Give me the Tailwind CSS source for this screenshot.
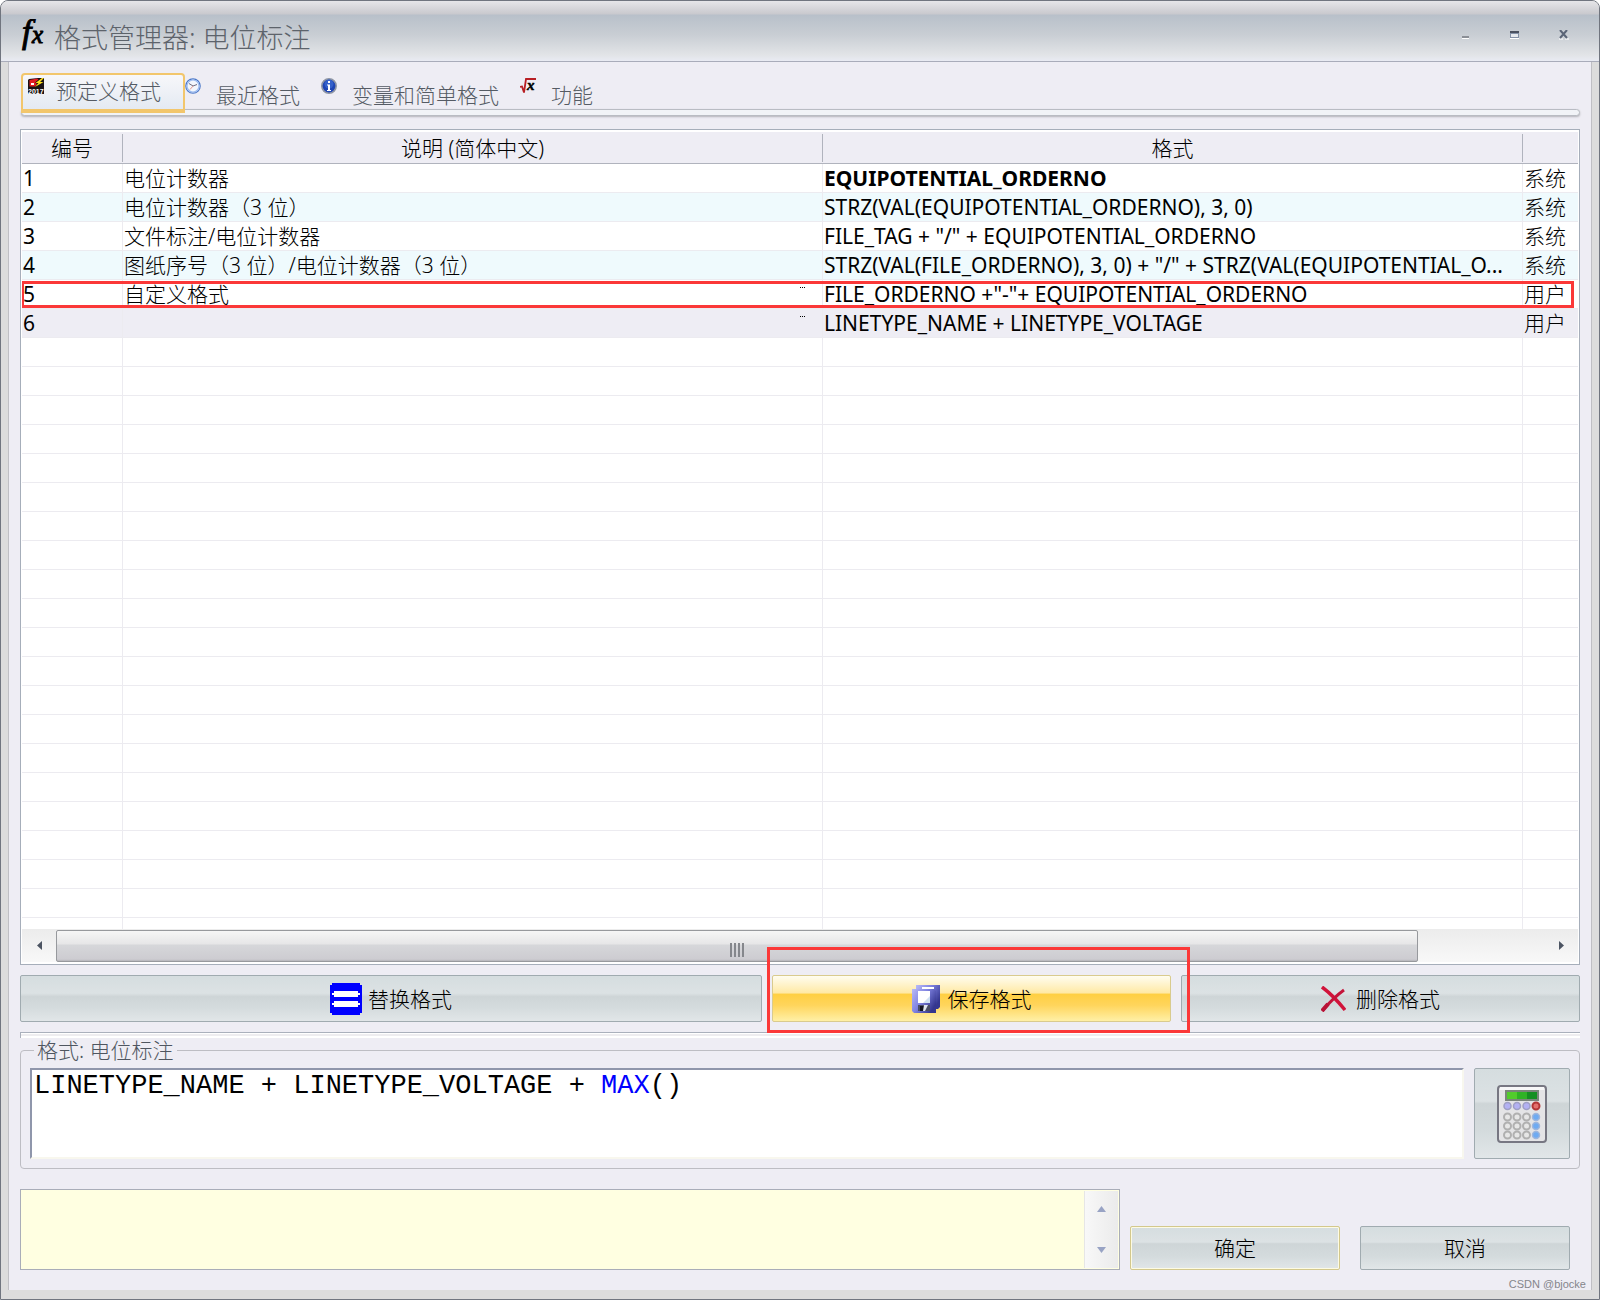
<!DOCTYPE html>
<html lang="zh-CN">
<head>
    <meta charset="UTF-8">
    <meta name="viewport" content="width=device-width, initial-scale=1.0">
    <title>格式管理器: 电位标注</title>
    <script src="https://cdn.jsdelivr.net/npm/@tailwindcss/browser@4"></script>
</head>
<body class="bg-white">
<div class="h-screen min-h-[700px] flex flex-col rounded-t-lg border border-[#70757f] bg-[#dcdcdc] overflow-hidden text-[21px] leading-7 text-black font-['Noto_Sans','Noto_Sans_CJK_SC',sans-serif]">

    <!-- Title bar -->
    <header class="h-[61px] shrink-0 flex items-center border-b border-[#a9acba] pl-4 pr-[30px] bg-[linear-gradient(#e6e6e9_0px,#c9c9ce_13px,#b8c0ca_14px,#c9ced4_34px,#e2e4e7_54px,#e9ebf3_60px)]">
        <svg class="w-[37px] h-8 mt-2" viewBox="0 0 37 32" aria-hidden="true" font-family="Liberation Serif" font-style="italic" stroke="#000">
            <text x="5" y="24" font-size="34" stroke-width="1">f</text>
            <text x="15" y="24" font-size="25" stroke-width="1">x</text>
        </svg>
        <h1 class="flex-1 pt-[14px] text-[27px] leading-9 font-light text-[#5d636b]">格式管理器: 电位标注</h1>
        <div class="flex gap-[39px] pt-2">
            <button type="button" aria-label="最小化">
                <svg class="w-[10px] h-[10px]" viewBox="0 0 10 10"><path d="M1 6h7v2H1z" fill="#8b8f96"/><path d="M1 8h7v1H1z" fill="#fff"/></svg>
            </button>
            <button type="button" aria-label="最大化">
                <svg class="w-[10px] h-[10px]" viewBox="0 0 10 10"><path d="M0 1h9v7H0z" fill="#8592a8"/><path d="M0 1h9v2H0z" fill="#4b5160"/><path d="M1 4h7v3H1z" fill="#e6e9ee"/><path d="M0 8h9v1H0z" fill="#fff"/></svg>
            </button>
            <button type="button" aria-label="关闭">
                <svg class="w-[10px] h-[10px]" viewBox="0 0 10 10"><path d="M0 9h4M6 9h4" stroke="#fff"/><path d="M1 0l7 8M8 0L1 8" stroke="#5b6577" stroke-width="2"/></svg>
            </button>
        </div>
    </header>

    <main class="flex-1 min-h-0 mx-[7px] mb-[9px] flex flex-col border-x border-[#bfbfc4] bg-[#eeedf4] px-[11px] pt-[11px]">

        <!-- Tabs -->
        <div class="shrink-0 flex items-start h-10 pl-px text-[#555b64] leading-7 font-light" role="tablist">
            <button type="button" role="tab" aria-selected="true" class="relative z-10 h-10 flex items-start gap-3 pl-[5px] pr-[22px] rounded-t border-2 border-b-4 border-[#f2c66c] bg-linear-to-b from-[#f7f7fa] to-[#e4eaf2]">
                <svg class="w-4 h-4 mt-[3px]" viewBox="0 0 16 16">
                    <path d="M1 1l9-1h6v16H0V2z" fill="#1a1214"/>
                    <path d="M1.500 2L9 .5l1.500 1L7 4.500l2 1.500-2 2.500H1.500z" fill="#e21b22"/>
                    <path d="M3 5h3v2H3z" fill="#fff"/>
                    <path d="M14 0L7.500 5h3L7 9l8.500-5H12l4-4z" fill="#ffe01a"/>
                    <text x="0" y="15.500" font-family="Liberation Sans" font-weight="bold" font-size="7" fill="#fff">2017</text>
                </svg>
                <span class="mt-[2px]">预定义格式</span>
            </button>
            <button type="button" role="tab" aria-selected="false" class="h-10 flex items-start gap-[15px] pr-[21px]">
                <svg class="w-4 h-4 mt-[5px]" viewBox="0 0 16 16">
                    <circle cx="8" cy="8" r="7.200" fill="#f3f7fd" stroke="#4c78c8" stroke-width="1.200"/>
                    <circle cx="8" cy="8" r="6" fill="none" stroke="#9dbcf0" stroke-width="1.200"/>
                    <path d="M4 5.500l4 2.500 4-1.500" fill="none" stroke="#6f6d80" stroke-width="1"/>
                    <path d="M8 8l-3 3.500" stroke="#e59a8e"/>
                </svg>
                <span class="mt-2">最近格式</span>
            </button>
            <button type="button" role="tab" aria-selected="false" class="h-10 flex items-start gap-[15px] pr-[21px]">
                <svg class="w-4 h-4 mt-[5px]" viewBox="0 0 16 16">
                    <circle cx="8" cy="8" r="7.200" fill="#1f45b4" stroke="#8f96a5" stroke-width="1.600"/>
                    <circle cx="8" cy="6" r="4.500" fill="#4a7be0" opacity=".5"/>
                    <path d="M7 3h2v2H7zM6 6.500h3V12h1v1H6v-1h1V7.500H6z" fill="#fff"/>
                </svg>
                <span class="mt-2">变量和简单格式</span>
            </button>
            <button type="button" role="tab" aria-selected="false" class="h-10 flex items-start gap-[15px]">
                <svg class="w-4 h-4 mt-[5px]" viewBox="0 0 16 16">
                    <path d="M0 9l2-.5 2 6L6 1h10" fill="none" stroke="#b81f24" stroke-width="1.800"/>
                    <text x="7" y="11.500" font-family="Liberation Serif" font-style="italic" font-weight="bold" font-size="15" stroke="#000" stroke-width=".5">x</text>
                </svg>
                <span class="mt-2">功能</span>
            </button>
        </div>
        <div class="shrink-0 h-[7px] -mt-1 ml-px rounded border border-[#b9bcc3] bg-[#f1f3f7] shadow-[0_1px_2px_#b4b4ba]"></div>

        <!-- Format list -->
        <section class="mt-[13px] flex-1 min-h-0 flex flex-col border border-[#a6aeba] bg-white pt-[2px] px-px pb-[2px]">
            <div class="flex-1 min-h-0 overflow-hidden">
                <table class="w-full table-fixed border-separate border-spacing-0">
                    <colgroup><col class="w-[101px]"><col><col><col class="w-[55px]"></colgroup>
                    <thead>
                        <tr class="h-8 bg-[#eeedf4]">
                            <th scope="col" class="p-0 font-light border-b border-[#b0b3bd]"><div class="h-7 border-r border-[#b0b3bd]">编号</div></th>
                            <th scope="col" class="p-0 font-light border-b border-[#b0b3bd]"><div class="h-7 border-r border-[#b0b3bd]">说明 (简体中文)</div></th>
                            <th scope="col" class="p-0 font-light border-b border-[#b0b3bd]"><div class="h-7 border-r border-[#b0b3bd]">格式</div></th>
                            <th scope="col" class="p-0 border-b border-[#b0b3bd]"></th>
                        </tr>
                    </thead>
                    <tbody id="formats" class="[&_td]:h-[29px] [&_td]:p-0 [&_td]:pl-px [&_td]:border-b [&_td]:border-r [&_td]:border-[#ecebf0] [&_td]:whitespace-nowrap [&_td:last-child]:border-r-0">
                        <tr><td>1</td><td class="font-light">电位计数器</td><td class="font-bold">EQUIPOTENTIAL_ORDERNO</td><td class="font-light">系统</td></tr>
                        <tr class="bg-[#effafd]"><td>2</td><td class="font-light">电位计数器（3 位）</td><td>STRZ(VAL(EQUIPOTENTIAL_ORDERNO), 3, 0)</td><td class="font-light">系统</td></tr>
                        <tr><td>3</td><td class="font-light">文件标注/电位计数器</td><td>FILE_TAG + "/" + EQUIPOTENTIAL_ORDERNO</td><td class="font-light">系统</td></tr>
                        <tr class="bg-[#effafd]"><td>4</td><td class="font-light">图纸序号（3 位）/电位计数器（3 位）</td><td>STRZ(VAL(FILE_ORDERNO), 3, 0) + "/" + STRZ(VAL(EQUIPOTENTIAL_O...</td><td class="font-light">系统</td></tr>
                        <tr class="relative">
                            <td>5<span class="absolute inset-y-px -left-px right-[4px] border-3 border-[#fb3838]"></span></td>
                            <td class="font-light"><div class="flex justify-between"><span>自定义格式</span><button type="button" aria-label="编辑说明" class="w-[22px] h-4"><svg class="w-[6px] h-[2px]" viewBox="0 0 6 2"><path d="M0 0h1v1H0zM2 0h1v1H2zM4 0h1v1H4z"/></svg></button></div></td>
                            <td>FILE_ORDERNO +"-"+ EQUIPOTENTIAL_ORDERNO</td><td class="font-light">用户</td>
                        </tr>
                        <tr class="bg-[#eeedf4]">
                            <td>6</td>
                            <td><div class="flex h-7 justify-end"><button type="button" aria-label="编辑说明" class="w-[22px] h-4"><svg class="w-[6px] h-[2px]" viewBox="0 0 6 2"><path d="M0 0h1v1H0zM2 0h1v1H2zM4 0h1v1H4z"/></svg></button></div></td>
                            <td>LINETYPE_NAME + LINETYPE_VOLTAGE</td><td class="font-light">用户</td>
                        </tr>
                    </tbody>
                </table>
            </div>
            <!-- Horizontal scrollbar -->
            <div class="shrink-0 h-[33px] flex bg-linear-to-b from-[#ececec] to-[#f8f8f8]">
                <button type="button" aria-label="向左滚动" class="w-[34px] flex items-center justify-center">
                    <svg class="w-[5px] h-[9px]" viewBox="0 0 5 9"><path d="M5 0v9L0 4.500z" fill="#4c5462"/></svg>
                </button>
                <div class="flex-1 flex pt-px">
                    <div class="flex-[1362] flex items-center justify-center gap-[2px] rounded-xs border border-[#97999d] bg-[linear-gradient(#f6f6f6,#e6e6e7_44%,#d6d7da_46%,#cdccd1_94%,#b4b4b9)]">
                        <i class="w-[2px] h-[14px] mt-2 bg-[#85878c]"></i><i class="w-[2px] h-[14px] mt-2 bg-[#85878c]"></i><i class="w-[2px] h-[14px] mt-2 bg-[#85878c]"></i><i class="w-[2px] h-[14px] mt-2 bg-[#85878c]"></i>
                    </div>
                    <div class="flex-[126]"></div>
                </div>
                <button type="button" aria-label="向右滚动" class="w-[34px] flex items-center justify-center">
                    <svg class="w-[5px] h-[9px]" viewBox="0 0 5 9"><path d="M0 0v9l5-4.500z" fill="#4c5462"/></svg>
                </button>
            </div>
        </section>

        <!-- Actions -->
        <div class="shrink-0 mt-[10px] h-[47px] flex gap-[10px] font-light">
            <button type="button" class="flex-[742] flex items-center justify-center gap-[6px] rounded-xs border border-[#a0abb0] bg-[linear-gradient(#d5dddf,#dce2e4_38%,#ced5d7_46%,#d4dbdd_70%,#e1e6e8)]">
                <svg class="w-8 h-8" viewBox="0 0 32 32"><path d="M2 0h28v2h2v28h-2v2H2v-2H0V2h2z" fill="#00f"/><path d="M4 8h24v2h2v2h-2v2H4v-2H2v-2h2zM4 18h24v2h2v2h-2v2H4v-2H2v-2h2z" fill="#fff"/></svg>
                替换格式
            </button>
            <div class="relative flex-[400] flex">
                <button type="button" class="flex-1 flex items-center justify-center gap-2 rounded-xs border border-[#d9cb8e] bg-[linear-gradient(#fffdf0,#ffe9a4_38%,#ffcf42_40%,#ffd55c_65%,#fff0a6)]">
                    <svg class="w-7 h-7" viewBox="0 0 28 28">
                        <defs><linearGradient id="disk" x1="0" x2="1" y2=".6"><stop offset="0" stop-color="#b9baf7"/><stop offset=".5" stop-color="#7f82e0"/><stop offset="1" stop-color="#34368f"/></linearGradient></defs>
                        <path d="M4 0h24v22l-2 2H4z" fill="url(#disk)"/>
                        <path d="M10 2h12v2H10z" fill="#fff"/>
                        <path d="M0 4h22l2 2v22H2l-2-2z" fill="url(#disk)"/>
                        <path d="M6 6h12v12H6z" fill="#fff"/><path d="M18 11v7h-7z" fill="#cfe0f2"/>
                        <path d="M6 20h12v6H6z" fill="#4a4d66"/><path d="M8 21h4v5H8z" fill="#151522"/><path d="M12 20h4l-3 6h-2z" fill="#dfe5ee"/>
                    </svg>
                    保存格式
                </button>
                <span class="absolute z-10 -top-7 -bottom-[11px] -left-[5px] -right-[19px] border-3 border-[#fb3838] pointer-events-none"></span>
            </div>
            <button type="button" class="flex-[398] flex items-center justify-center gap-[10px] rounded-xs border border-[#a0abb0] bg-[linear-gradient(#d5dddf,#dce2e4_38%,#ced5d7_46%,#d4dbdd_70%,#e1e6e8)]">
                <svg class="w-[25px] h-[26px]" viewBox="0 0 25 26"><path d="M1 1c8 6 15 13 23 23" fill="none" stroke="#d1133a" stroke-width="3.500"/><path d="M23 4C16 9 8 17 2 24" fill="none" stroke="#c4143a" stroke-width="3"/><path d="M1 25l6-7" stroke="#b81236" stroke-width="4"/></svg>
                删除格式
            </button>
        </div>

        <div class="shrink-0 mt-[10px] h-[6px] border-t border-l border-[#aab0bc] bg-white"><div class="mt-px h-[2px] bg-[#eeedf0]"></div></div>

        <!-- Formula editor -->
        <fieldset class="shrink-0 min-w-0 rounded border border-[#bdbdc3] px-[9px] pt-[6px] pb-[9px]">
            <legend class="ml-[4px] px-[3px] leading-6 font-light text-[#4f5660]"><label for="formula">格式: 电位标注</label></legend>
            <div class="flex gap-[10px] h-[91px]">
                <div class="flex-1 grid border-2 border-t-[#8f96ab] border-l-[#8f96ab] border-r-[#f8f7ee] border-b-[#f8f7ee] bg-white font-['Liberation_Mono',monospace] text-[27px] leading-8">
                    <pre id="highlight" aria-hidden="true" class="[grid-area:1/1] overflow-hidden px-[2px] font-['Liberation_Mono',monospace]"></pre>
                    <textarea id="formula" spellcheck="false" class="[grid-area:1/1] resize-none px-[2px] bg-transparent text-transparent caret-black outline-none">LINETYPE_NAME + LINETYPE_VOLTAGE + MAX()</textarea>
                </div>
                <button type="button" aria-label="计算器" class="w-24 flex items-center justify-center rounded-xs border border-[#a0abb0] bg-[linear-gradient(#d5dddf,#dce2e4_36%,#ced5d7_39%,#d4dbdd_70%,#e1e6e8)]">
                    <svg class="w-[50px] h-[58px]" viewBox="0 0 50 58">
                        <rect x="1" y="1" width="48" height="56" rx="3" fill="#e4e4e6" stroke="#777782" stroke-width="2"/>
                        <path d="M3 2h44v3H3z" fill="#f7f7f8"/>
                        <path d="M8 5h34v11H8z" fill="#7a857a"/><path d="M10 7h30v7H10z" fill="#158f22"/><path d="M10 7h20v7H10z" fill="#2fb325"/><path d="M10 7h10v7H10z" fill="#52cc2c"/>
                        <g fill="#b3b1f3" stroke="#9f9fc4" stroke-width="1.500"><circle cx="10.500" cy="21" r="3.500"/><circle cx="20" cy="21" r="3.500"/><circle cx="29.500" cy="21" r="3.500"/></g>
                        <circle cx="39" cy="21" r="3.500" fill="#e4706c" stroke="#b33535" stroke-width="2"/>
                        <g fill="#e6e6e6" stroke="#b0b0b0" stroke-width="2"><circle cx="10.500" cy="32" r="3.500"/><circle cx="20" cy="32" r="3.500"/><circle cx="29.500" cy="32" r="3.500"/><circle cx="10.500" cy="41" r="3.500"/><circle cx="20" cy="41" r="3.500"/><circle cx="29.500" cy="41" r="3.500"/><circle cx="10.500" cy="50" r="3.500"/><circle cx="20" cy="50" r="3.500"/><circle cx="29.500" cy="50" r="3.500"/></g>
                        <g fill="#6fabf2" stroke="#9fb6dc" stroke-width="1.500"><circle cx="39" cy="32" r="3.500"/><circle cx="39" cy="41" r="3.500"/><circle cx="39" cy="50" r="3.500"/></g>
                    </svg>
                </button>
            </div>
        </fieldset>

        <!-- Message area and dialog buttons -->
        <footer class="shrink-0 mt-5 flex items-end font-light">
            <div class="flex-1 h-[81px] flex border border-[#a9adb8] bg-[#ffffe1]">
                <textarea aria-label="消息" readonly class="flex-1 resize-none outline-none"></textarea>
                <div class="w-[34px] my-px mr-px flex flex-col items-center justify-between py-[15px] border-l border-[#e6e6e6] bg-linear-to-r from-[#f8f8f8] to-[#ebebeb]">
                    <svg class="w-[9px] h-[6px]" viewBox="0 0 9 6"><path d="M0 6h9L4.500 0z" fill="#98a3c4"/></svg>
                    <svg class="w-[9px] h-[6px]" viewBox="0 0 9 6"><path d="M0 0h9L4.500 6z" fill="#98a3c4"/></svg>
                </div>
            </div>
            <button type="button" class="ml-[10px] w-[210px] h-11 rounded-xs border border-[#d3c88c] inset-ring inset-ring-[#fdfbe4] bg-[linear-gradient(#d5dddf,#dce2e4_36%,#ced5d7_40%,#d4dbdd_70%,#e1e6e8)]">确定</button>
            <button type="button" class="ml-5 mr-[10px] w-[210px] h-11 rounded-xs border border-[#a0abb0] bg-[linear-gradient(#d5dddf,#dce2e4_36%,#ced5d7_40%,#d4dbdd_70%,#e1e6e8)]">取消</button>
        </footer>
        <p class="shrink-0 mt-[6px] h-[14px] -mr-[6px] text-right text-[11px] leading-4 text-[#85858b] font-['Liberation_Sans',sans-serif]">CSDN @bjocke</p>
    </main>
</div>

<script>
    // fill the rest of the grid with empty rows
    const formats = document.getElementById('formats');
    for (let i = 0; i < 21; i++) {
        const row = formats.insertRow();
        for (let c = 0; c < 4; c++) row.insertCell();
    }

    // colour the function names in the formula
    const formula = document.getElementById('formula');
    const highlight = document.getElementById('highlight');
    function paint() {
        highlight.innerHTML = formula.value
            .replace(/&/g, '&amp;').replace(/</g, '&lt;')
            .replace(/\b(MAX|MIN|VAL|STRZ)(?=\()/g, '<span class="text-[#0000ff]">$1</span>');
    }
    formula.addEventListener('input', paint);
    paint();
</script>
</body>
</html>
